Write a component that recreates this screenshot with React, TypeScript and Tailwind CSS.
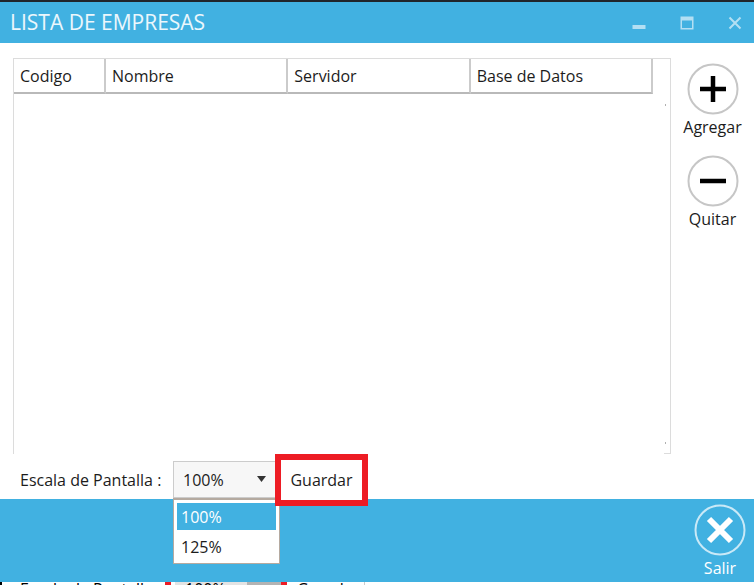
import React, { useState } from "react";

const columns = [
  { name: "Codigo", width: "w-[92px]" },
  { name: "Nombre", width: "" },
  { name: "Servidor", width: "" },
  { name: "Base de Datos", width: "" },
];

const scales = ["100%", "125%"];

const TitleBar = () => (
  <header className="flex h-[43px] items-center justify-between border-t-2 border-[#20252b] bg-[#41b1e1] pl-2.5 pr-3 text-white">
    <h1 className="text-[21px] text-white/90">LISTA DE EMPRESAS</h1>
    <div className="flex items-center gap-[34px] opacity-60">
      <button aria-label="Minimizar">
        <svg width="14" height="14" viewBox="0 0 14 14">
          <path d="M0.5 9h13v4h-13z" fill="currentColor" />
        </svg>
      </button>
      <button aria-label="Maximizar">
        <svg width="14" height="14" viewBox="0 0 14 14">
          <path d="M0.5 0.5h13v13h-13z M2 4.5v7.5h10v-7.5z" fill="currentColor" fillRule="evenodd" />
        </svg>
      </button>
      <button aria-label="Cerrar">
        <svg width="14" height="14" viewBox="0 0 14 14">
          <path d="M1.500 1.500l11 11M12.500 1.500l-11 11" stroke="currentColor" strokeWidth="2" />
        </svg>
      </button>
    </div>
  </header>
);

const SideButton = ({ label, path }: { label: string; path: string }) => (
  <button className="flex w-full flex-col items-center">
    <svg width="52" height="52" viewBox="0 0 52 52">
      <circle cx="26" cy="26" r="24.5" fill="none" stroke="#c6c6c6" strokeWidth="2" />
      <path d={path} stroke="#000" strokeWidth="4.5" />
    </svg>
    <span className="leading-6">{label}</span>
  </button>
);

// top edge of the window that sits behind this one
const WindowBehind = () => (
  <div aria-hidden="true" className="flex h-[3px] overflow-hidden border-l-2 border-black bg-white leading-[14px] text-black">
    <span className="w-[163px] shrink-0 pl-[18px]">Escala de Pantalla :</span>
    <span className="w-[122px] shrink-0 border-x-[6px] border-[#ed1c24] pl-1">
      <span className="flex">
        <span className="w-[72px] bg-[#e3e3e3] pl-2.5">100%</span>
        <span className="h-3.5 flex-1 bg-[#b3b3b3]" />
      </span>
    </span>
    <span className="w-[78px] border-r border-[#cccccc] pl-2.5">Guardar</span>
  </div>
);

export default function App() {
  const [scale, setScale] = useState("100%");

  return (
    <div className="flex min-h-screen flex-col bg-white font-['Open_Sans',sans-serif] text-base text-[#1c1c1c]">
      <TitleBar />

      <main className="flex flex-1 flex-col">
        <div className="flex flex-1 pl-[13px] pt-[15px]">
          <div className="relative min-h-40 flex-1 border border-b-0 border-[#dcdcdc] pr-[17px]">
            <table className="w-full table-fixed border-separate border-spacing-0">
              <thead>
                <tr>
                  {columns.map((c) => (
                    <th key={c.name} className={`${c.width} h-[35px] border-b-2 border-r-2 border-r-[#cbcbcb] border-b-[#b9b9b9] p-0 pl-1.5 text-left font-normal`}>
                      {c.name}
                    </th>
                  ))}
                </tr>
              </thead>
            </table>
            <span className="absolute right-1 top-[45px] h-0.5 w-px bg-[#b0b0b0]" />
            <span className="absolute bottom-2.5 right-1 h-0.5 w-px bg-[#b0b0b0]" />
            <span className="absolute bottom-0 right-0 h-px w-1.5 bg-[#dcdcdc]" />
          </div>
          <div className="flex w-[83px] flex-col gap-4 pt-[5px]">
            <SideButton label="Agregar" path="M13 26h26M26 13v26" />
            <SideButton label="Quitar" path="M13 26h26" />
          </div>
        </div>

        <div className="flex h-[45px] items-start pl-5">
          <label htmlFor="escala" className="w-[153px] pt-3.5">
            Escala de Pantalla :
          </label>
          <div className="relative mt-[7px] h-[37px] w-[104px]">
            <select
              id="escala"
              value={scale}
              onChange={(e) => setScale(e.target.value)}
              className="h-full w-full appearance-none border border-[#cccccc] bg-[#f7f7f7] pl-[9px]"
            >
              {scales.map((s) => (
                <option key={s}>{s}</option>
              ))}
            </select>
            <svg className="pointer-events-none absolute right-[11px] top-[15px]" width="9" height="6" viewBox="0 0 9 6">
              <path d="M0 0h9L4.500 6z" fill="#333" />
            </svg>
            <ul className="absolute left-0 top-full z-10 flex w-[107px] flex-col gap-[3px] border border-t-2 border-[#b5aaa0] bg-white p-[3px]">
              {scales.map((s) => (
                <li key={s}>
                  <button
                    onClick={() => setScale(s)}
                    className={`block h-[27px] w-full pl-1 text-left ${s === scale ? "bg-[#41b1e1] text-white" : ""}`}
                  >
                    {s}
                  </button>
                </li>
              ))}
            </ul>
          </div>
          <button className="relative z-20 -ml-0.5 h-[52px] w-[93px] shrink-0 border-[6px] border-[#ed1c24] bg-white">
            Guardar
          </button>
        </div>
      </main>

      <footer className="flex h-[83px] justify-end bg-[#41b1e1] pr-2 pt-[5px]">
        <button className="flex flex-col items-center text-white">
          <svg width="52" height="52" viewBox="0 0 52 52">
            <circle cx="26" cy="26" r="24.500" fill="none" stroke="#c9e9f7" strokeWidth="2" />
            <path d="M15 15l22 22M37 15l-22 22" stroke="#fff" strokeWidth="6" />
          </svg>
          <span className="leading-6">Salir</span>
        </button>
      </footer>
      <WindowBehind />
    </div>
  );
}
